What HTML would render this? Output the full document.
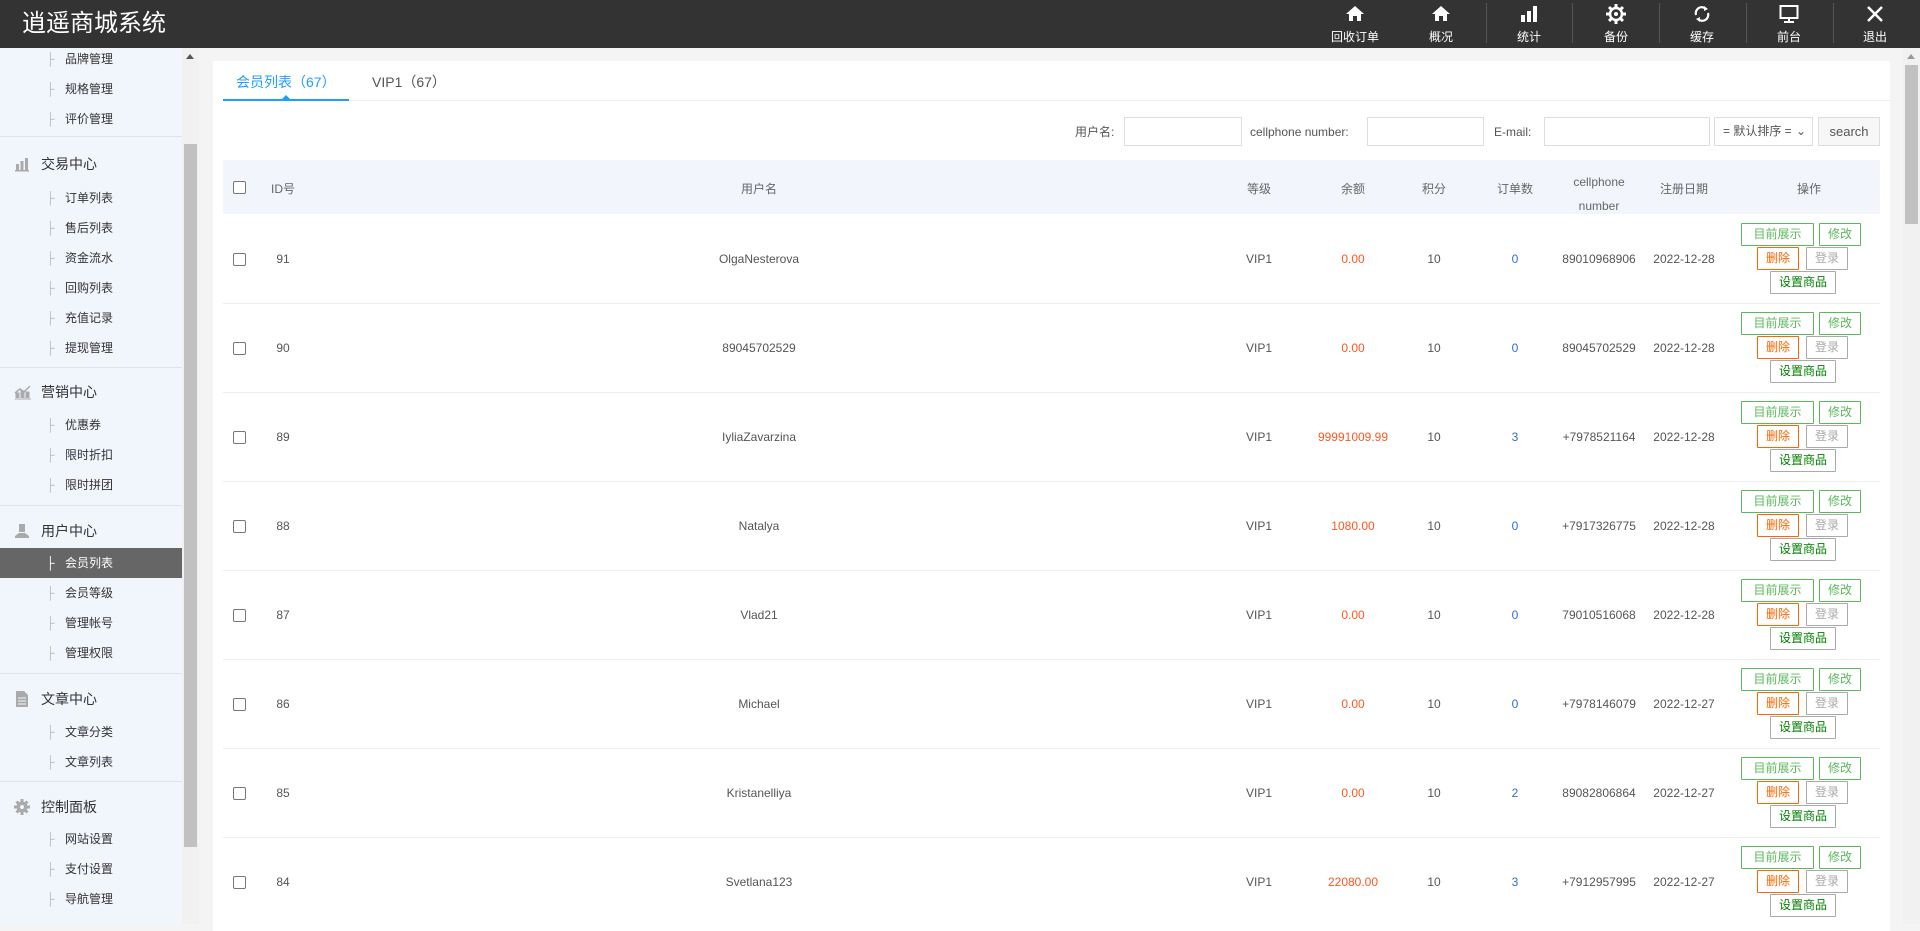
<!DOCTYPE html>
<html><head><meta charset="utf-8">
<style>
*{margin:0;padding:0;box-sizing:border-box}
body{width:1920px;height:924px;overflow:hidden;background:#f4f4f4;font-family:"Liberation Sans","Noto Sans CJK SC",sans-serif;font-size:12px;color:#666;position:relative}
.a{position:absolute}
#top{left:0;top:0;width:1920px;height:48px;background:#333}
.logo{left:22px;top:8px;font-size:24px;color:#fff;line-height:32px}
.nav{top:0;width:88px;height:48px;text-align:center;color:#fff}
.nav svg{position:absolute;left:34px;top:4px}
.nav span{position:absolute;left:0;right:0;top:29px;font-size:12px;line-height:16px}
.sep{top:3px;width:1px;height:40px;background:#555}
#side{left:0;top:48px;width:182px;height:876px;background:#f1f5fc;overflow:hidden}
.it{left:0;width:182px;height:30px;line-height:30px;color:#333;font-size:12px}
.it i{position:absolute;left:46px;font-style:normal;color:#bbb}
.it b{position:absolute;left:65px;font-weight:normal}
.it.on{background:#666;color:#fff}
.it.on i{color:#fff}
.hd{left:0;width:182px;height:30px;line-height:30px;font-size:14px;color:#333}
.hd b{position:absolute;left:41px;font-weight:normal}
.hd svg{position:absolute;left:14px;top:7px}
.dv{left:0;width:182px;height:1px;background:#e0e4ea}
.card{left:213px;top:61px;width:1677px;height:870px;background:#fff}
.tab{top:72px;font-size:14px;line-height:20px}
.lbl{top:124px;line-height:16px;color:#555;font-size:12px}
.inp{top:117px;height:29px;border:1px solid #ddd;background:#fff}
.th{top:160px;left:223px;width:1657px;height:54px;background:#f2f5fc}
.c{text-align:center;font-size:12px}
.cb{width:13px;height:13px;border:1px solid #777;border-radius:2px;background:#fff}
.rl{left:223px;width:1657px;height:1px;background:#eee}
.bt{height:23px;line-height:21px;text-align:center;font-size:12px;border:1px solid;background:#fff;border-radius:1px}
.g{border-color:#5cb85c;color:#5cb85c}
.o{border-color:#ff6600;color:#ff6600}
.gr{border-color:#aaa;color:#aaa}
.sg{border-color:#aaa;color:#008000}
</style></head><body>
<div id="top" class="a">
<div class="a logo">逍遥商城系统</div>
<div class="a nav" style="left:1311px"><svg width="20" height="20" viewBox="0 0 20 20"><path d="M10 2L1 10h3v7h4v-5h4v5h4v-7h3z" fill="#fff"/></svg><span>回收订单</span></div>
<div class="a nav" style="left:1397px"><svg width="20" height="20" viewBox="0 0 20 20"><path d="M10 2L1 10h3v7h4v-5h4v5h4v-7h3z" fill="#fff"/></svg><span>概况</span></div>
<div class="a sep" style="left:1486px"></div>
<div class="a nav" style="left:1485px"><svg width="20" height="20" viewBox="0 0 20 20"><rect x="2" y="11" width="4" height="7" fill="#fff"/><rect x="8" y="7" width="4" height="11" fill="#fff"/><rect x="14" y="2" width="4" height="16" fill="#fff"/></svg><span>统计</span></div>
<div class="a sep" style="left:1572px"></div>
<div class="a nav" style="left:1572px"><svg width="20" height="20" viewBox="0 0 20 20"><circle cx="10" cy="10" r="6" fill="none" stroke="#fff" stroke-width="2.5"/><circle cx="10" cy="10" r="2" fill="#fff"/><g stroke="#fff" stroke-width="3"><path d="M10 0v4M10 16v4M0 10h4M16 10h4M3 3l3 3M14 14l3 3M17 3l-3 3M3 17l3-3"/></g></svg><span>备份</span></div>
<div class="a sep" style="left:1659px"></div>
<div class="a nav" style="left:1658px"><svg width="20" height="20" viewBox="0 0 20 20"><path d="M4 11a6 6 0 0 1 10-6" fill="none" stroke="#fff" stroke-width="2.2"/><path d="M16 9a6 6 0 0 1-10 6" fill="none" stroke="#fff" stroke-width="2.2"/><path d="M12 2l4 3-4 2z" fill="#fff"/><path d="M8 18l-4-3 4-2z" fill="#fff"/></svg><span>缓存</span></div>
<div class="a sep" style="left:1746px"></div>
<div class="a nav" style="left:1745px"><svg width="20" height="20" viewBox="0 0 20 20"><rect x="1.5" y="2" width="17" height="12" fill="none" stroke="#fff" stroke-width="2"/><path d="M10 14v3M5 18h10" stroke="#fff" stroke-width="2"/></svg><span>前台</span></div>
<div class="a sep" style="left:1833px"></div>
<div class="a nav" style="left:1831px"><svg width="20" height="20" viewBox="0 0 20 20"><path d="M3 3l14 14M17 3L3 17" stroke="#fff" stroke-width="2.5"/></svg><span>退出</span></div>
</div>

<div id="side" class="a">
<div class="a it" style="top:-4px"><i>├</i><b>品牌管理</b></div>
<div class="a it" style="top:26px"><i>├</i><b>规格管理</b></div>
<div class="a it" style="top:56px"><i>├</i><b>评价管理</b></div>
<div class="a dv" style="top:88px"></div>
<div class="a hd" style="top:101px"><svg width="16" height="16" viewBox="0 0 16 16"><rect x="2" y="8" width="3" height="6" fill="#aaa"/><rect x="6.5" y="5" width="3" height="9" fill="#aaa"/><rect x="11" y="2" width="3" height="12" fill="#aaa"/><rect x="1" y="14" width="14" height="1.5" fill="#aaa"/></svg><b>交易中心</b></div>
<div class="a it" style="top:135px"><i>├</i><b>订单列表</b></div>
<div class="a it" style="top:165px"><i>├</i><b>售后列表</b></div>
<div class="a it" style="top:195px"><i>├</i><b>资金流水</b></div>
<div class="a it" style="top:225px"><i>├</i><b>回购列表</b></div>
<div class="a it" style="top:255px"><i>├</i><b>充值记录</b></div>
<div class="a it" style="top:285px"><i>├</i><b>提现管理</b></div>
<div class="a dv" style="top:319px"></div>
<div class="a hd" style="top:329px"><svg width="18" height="16" viewBox="0 0 18 16"><path d="M1 15h16M2 14V9h3v5M7 14V7h3v7M12 14V8h3v6" fill="#aaa" stroke="#aaa"/><path d="M1 9l5-4 4 3 6-6" fill="none" stroke="#aaa" stroke-width="1.5"/></svg><b>营销中心</b></div>
<div class="a it" style="top:362px"><i>├</i><b>优惠券</b></div>
<div class="a it" style="top:392px"><i>├</i><b>限时折扣</b></div>
<div class="a it" style="top:422px"><i>├</i><b>限时拼团</b></div>
<div class="a dv" style="top:457px"></div>
<div class="a hd" style="top:468px"><svg width="16" height="16" viewBox="0 0 16 16"><rect x="5" y="1" width="6" height="8" fill="#aaa"/><path d="M1 15h14v-2l-4-3H5l-4 3z" fill="#aaa"/></svg><b>用户中心</b></div>
<div class="a it on" style="top:500px"><i>├</i><b>会员列表</b></div>
<div class="a it" style="top:530px"><i>├</i><b>会员等级</b></div>
<div class="a it" style="top:560px"><i>├</i><b>管理帐号</b></div>
<div class="a it" style="top:590px"><i>├</i><b>管理权限</b></div>
<div class="a dv" style="top:625px"></div>
<div class="a hd" style="top:636px"><svg width="16" height="16" viewBox="0 0 16 16"><path d="M2 0h8l4 4v12H2z" fill="#aaa"/><path d="M4 7h8M4 10h8M4 13h8" stroke="#f1f5fc" stroke-width="1"/></svg><b>文章中心</b></div>
<div class="a it" style="top:669px"><i>├</i><b>文章分类</b></div>
<div class="a it" style="top:699px"><i>├</i><b>文章列表</b></div>
<div class="a dv" style="top:733px"></div>
<div class="a hd" style="top:744px"><svg width="16" height="16" viewBox="0 0 16 16"><circle cx="8" cy="8" r="5.5" fill="#aaa"/><circle cx="8" cy="8" r="2" fill="#f1f5fc"/><g stroke="#aaa" stroke-width="3"><path d="M8 0v16M0 8h16M2.5 2.5l11 11M13.5 2.5l-11 11"/></g><circle cx="8" cy="8" r="2" fill="#f1f5fc"/></svg><b>控制面板</b></div>
<div class="a it" style="top:776px"><i>├</i><b>网站设置</b></div>
<div class="a it" style="top:806px"><i>├</i><b>支付设置</b></div>
<div class="a it" style="top:836px"><i>├</i><b>导航管理</b></div>
</div>
<div class="a" style="left:182px;top:48px;width:17px;height:876px;background:#f1f1f1"></div>
<div class="a" style="left:186px;top:54px;width:0;height:0;border-left:4px solid transparent;border-right:4px solid transparent;border-bottom:5px solid #555"></div>
<div class="a" style="left:184px;top:144px;width:13px;height:703px;background:#c1c1c1"></div>
<div class="a" style="left:1903px;top:48px;width:17px;height:876px;background:#f1f1f1"></div>
<div class="a" style="left:1907px;top:54px;width:0;height:0;border-left:4px solid transparent;border-right:4px solid transparent;border-bottom:5px solid #999"></div>
<div class="a" style="left:1905px;top:65px;width:13px;height:159px;background:#c1c1c1"></div>

<div class="a card"></div>
<div class="a tab" style="left:236px;color:#1e9fff">会员列表（67）</div>
<div class="a tab" style="left:372px;color:#555">VIP1（67）</div>
<div class="a" style="left:223px;top:100px;width:1667px;height:1px;background:#eee"></div>
<div class="a" style="left:223px;top:99px;width:126px;height:2px;background:#1e9fff"></div>
<div class="a" style="left:282px;top:95px;width:0;height:0;border-left:4px solid transparent;border-right:4px solid transparent;border-bottom:4px solid #1e9fff"></div>

<div class="a lbl" style="left:1075px">用户名:</div>
<div class="a inp" style="left:1124px;width:118px"></div>
<div class="a lbl" style="left:1250px">cellphone number:</div>
<div class="a inp" style="left:1367px;width:117px"></div>
<div class="a lbl" style="left:1494px">E-mail:</div>
<div class="a inp" style="left:1544px;width:166px"></div>
<div class="a inp" style="left:1714px;width:99px;line-height:27px;padding-left:8px;color:#555">= 默认排序 = <span style="position:absolute;right:6px;top:0">⌄</span></div>
<div class="a inp" style="left:1818px;width:62px;line-height:27px;text-align:center;color:#555;background:#f7f7f7;font-size:13px">search</div>

<div class="a th"></div>
<div class="a cb" style="left:233px;top:181px"></div>
<div class="a" style="left:271px;top:180px">ID号</div>
<div class="a c" style="left:709px;width:100px;top:180px">用户名</div>
<div class="a c" style="left:1219px;width:80px;top:180px">等级</div>
<div class="a c" style="left:1313px;width:80px;top:180px">余额</div>
<div class="a c" style="left:1394px;width:80px;top:180px">积分</div>
<div class="a c" style="left:1475px;width:80px;top:180px">订单数</div>
<div class="a c" style="left:1549px;width:100px;top:170px;line-height:24px">cellphone<br>number</div>
<div class="a c" style="left:1644px;width:80px;top:180px">注册日期</div>
<div class="a c" style="left:1769px;width:80px;top:180px">操作</div>

<div id="rows"></div>
<script>
var d=[["91","OlgaNesterova","0.00","0","89010968906","2022-12-28"],["90","89045702529","0.00","0","89045702529","2022-12-28"],["89","IyliaZavarzina","99991009.99","3","+7978521164","2022-12-28"],["88","Natalya","1080.00","0","+7917326775","2022-12-28"],["87","Vlad21","0.00","0","79010516068","2022-12-28"],["86","Michael","0.00","0","+7978146079","2022-12-27"],["85","Kristanelliya","0.00","2","89082806864","2022-12-27"],["84","Svetlana123","22080.00","3","+7912957995","2022-12-27"]];
var h="";
d.forEach(function(r,i){var t=214+i*89,m=t+38;
h+='<div class="a cb" style="left:233px;top:'+(t+39)+'px"></div>';
h+='<div class="a c" style="left:263px;width:40px;top:'+m+'px;color:#555">'+r[0]+'</div>';
h+='<div class="a c" style="left:609px;width:300px;top:'+m+'px;color:#555">'+r[1]+'</div>';
h+='<div class="a c" style="left:1219px;width:80px;top:'+m+'px;color:#555">VIP1</div>';
h+='<div class="a c" style="left:1303px;width:100px;top:'+m+'px;color:#ff5722">'+r[2]+'</div>';
h+='<div class="a c" style="left:1394px;width:80px;top:'+m+'px;color:#555">10</div>';
h+='<div class="a c" style="left:1475px;width:80px;top:'+m+'px;color:#2f6fd6">'+r[3]+'</div>';
h+='<div class="a c" style="left:1549px;width:100px;top:'+m+'px;color:#555">'+r[4]+'</div>';
h+='<div class="a c" style="left:1644px;width:80px;top:'+m+'px;color:#555">'+r[5]+'</div>';
h+='<div class="a bt g" style="left:1741px;top:'+(t+9)+'px;width:73px">目前展示</div>';
h+='<div class="a bt g" style="left:1819px;top:'+(t+9)+'px;width:42px">修改</div>';
h+='<div class="a bt o" style="left:1757px;top:'+(t+33)+'px;width:42px">删除</div>';
h+='<div class="a bt gr" style="left:1806px;top:'+(t+33)+'px;width:42px">登录</div>';
h+='<div class="a bt sg" style="left:1770px;top:'+(t+57)+'px;width:66px">设置商品</div>';
if(i<7)h+='<div class="a rl" style="top:'+(t+89)+'px"></div>';
});
document.getElementById("rows").innerHTML=h;
</script>
</body></html>
